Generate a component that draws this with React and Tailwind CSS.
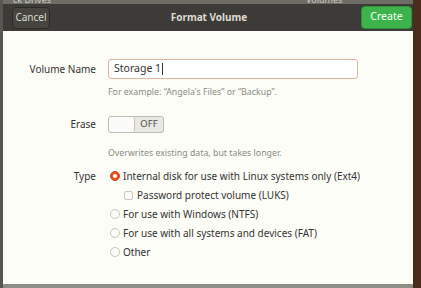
import React from "react";

const F = { fontFamily: '"Noto Sans", "Liberation Sans", sans-serif' };

function Radio({ checked }) {
  return checked ? (
    <span className="inline-flex w-[10px] h-[10px] rounded-full bg-[#e95420] items-center justify-center shrink-0 border border-[#c7451a]">
      <span className="w-[4px] h-[4px] rounded-full bg-white" />
    </span>
  ) : (
    <span className="inline-block w-[10px] h-[10px] rounded-full bg-[#fbfbf8] border border-[#c9c8c2] shrink-0" />
  );
}

export default function App() {
  return (
    <div className="w-[421px] h-[288px] overflow-hidden flex bg-[#5b5a53]" style={F}>
      <div className="w-[3px] bg-[#57564f]" />
      <div className="w-[410px] flex flex-col">
        <div className="h-[4px] bg-[#6e6d66] overflow-hidden flex text-[9px] leading-[6px] text-[#cfcdc4]">
          <span className="ml-[10px] mt-[-3px]">ck Drives</span>
          <span className="ml-[255px] mt-[-3px]">Volumes</span>
        </div>
        <div className="h-[27px] bg-[#3c3b37] flex items-center justify-between pl-[9px] pr-[1px] relative">
          <div className="h-[22px] w-[38px] flex items-center justify-center rounded-[4px] border border-[#2a2a27] bg-[#45443f] text-[10px] text-[#dfdbd2]">Cancel</div>
          <div className="absolute left-[2px] right-0 text-center text-[10px] font-bold text-[#dfdbd2] pointer-events-none">Format Volume</div>
          <div className="h-[23px] w-[51px] mt-[-1px] flex items-center justify-center rounded-[4px] bg-[#3cb44b] border border-[#2e8f3a] text-[10.5px] text-white">Create</div>
        </div>
        <div className="flex-1 bg-[#fdfdf8] text-[10px] text-[#333333]">
          <div className="flex items-center mt-[28px] h-[20px]">
            <div className="w-[93px] text-right">Volume Name</div>
            <div className="ml-[12px] w-[250px] h-[20px] rounded-[3px] border border-[#e3b49c] bg-white flex items-center px-[5px] text-[10.5px]">
              <span>Storage 1</span>
              <span className="w-[1px] h-[12px] bg-[#333] ml-[1px]" />
            </div>
          </div>
          <div className="ml-[105px] mt-[7px] text-[8.8px] leading-[12px] text-[#8a8a85]">For example: “Angela's Files” or “Backup”.</div>
          <div className="flex items-center mt-[18px] h-[17px]">
            <div className="w-[93px] text-right">Erase</div>
            <div className="ml-[12px] w-[56px] h-[17px] rounded-[3px] border border-[#bcbbb5] bg-[#e9e8e2] flex overflow-hidden">
              <div className="w-[26px] h-full bg-[#fbfbf9] border-r border-[#c4c3bd] rounded-[3px]" />
              <div className="flex-1 flex items-center justify-center text-[9.5px] text-[#4c4c4c]">OFF</div>
            </div>
          </div>
          <div className="ml-[105px] mt-[14px] text-[8.8px] leading-[12px] text-[#8a8a85]">Overwrites existing data, but takes longer.</div>
          <div className="flex mt-[9px]">
            <div className="w-[93px] text-right leading-[16px]">Type</div>
            <div className="ml-[14px] flex flex-col gap-[3px]">
              <div className="flex items-center gap-[3px] h-[16px]"><Radio checked /><span>Internal disk for use with Linux systems only (Ext4)</span></div>
              <div className="flex items-center gap-[4px] h-[16px] ml-[14px]"><span className="w-[9px] h-[9px] border border-[#c9c8c2] rounded-[2px] bg-[#fbfbf8]" /><span>Password protect volume (LUKS)</span></div>
              <div className="flex items-center gap-[3px] h-[16px]"><Radio /><span>For use with Windows (NTFS)</span></div>
              <div className="flex items-center gap-[3px] h-[16px]"><Radio /><span>For use with all systems and devices (FAT)</span></div>
              <div className="flex items-center gap-[3px] h-[16px]"><Radio /><span>Other</span></div>
            </div>
          </div>
        </div>
        <div className="h-[4px] bg-[#8e8d86]" />
      </div>
      <div className="w-[8px] bg-[#4a2c1c]" />
    </div>
  );
}
